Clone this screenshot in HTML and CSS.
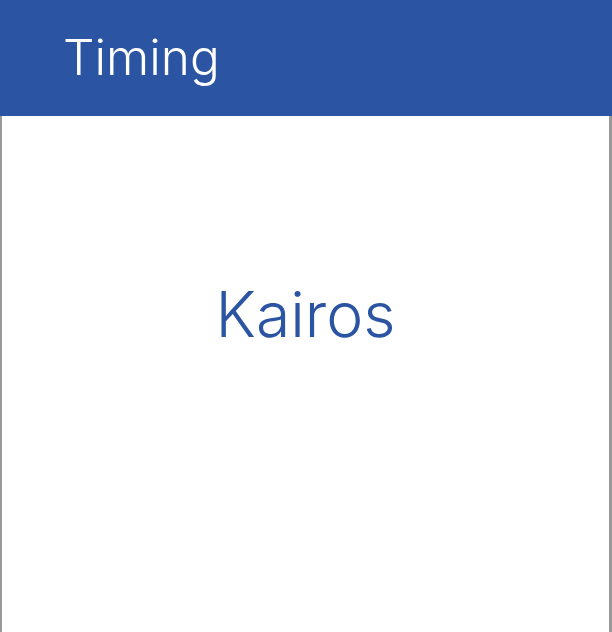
FILE: index.html
```html
<!DOCTYPE html>
<html>
<head>
<meta charset="utf-8">
<link rel="stylesheet" href="styles.css">
</head>
<body>
<div class="frame">
  <header class="bar"><h1 class="title">Timing</h1></header>
  <main class="content"><p class="word">Kairos</p></main>
</div>
</body>
</html>
```
FILE: styles.css
```css
html, body { margin: 0; padding: 0; }
body { width: 612px; height: 632px; overflow: hidden; background: #fff; font-family: Inter, "Noto Sans", sans-serif; }
.frame { display: flex; flex-direction: column; height: 632px; }
.bar { background: #2b54a2; height: 116px; display: flex; align-items: center; padding-left: 63px; flex-shrink: 0; }
.title { margin: 0; color: #fff; font-weight: 300; font-size: 49.5px; line-height: 1; }
.content { flex: 1; border-left: 2px solid #999; border-right: 3px solid #999; display: flex; justify-content: center; padding-top: 167px; }
.word { margin: 0; color: #2b54a2; font-size: 62.5px; font-weight: 300; line-height: 1; }
```
